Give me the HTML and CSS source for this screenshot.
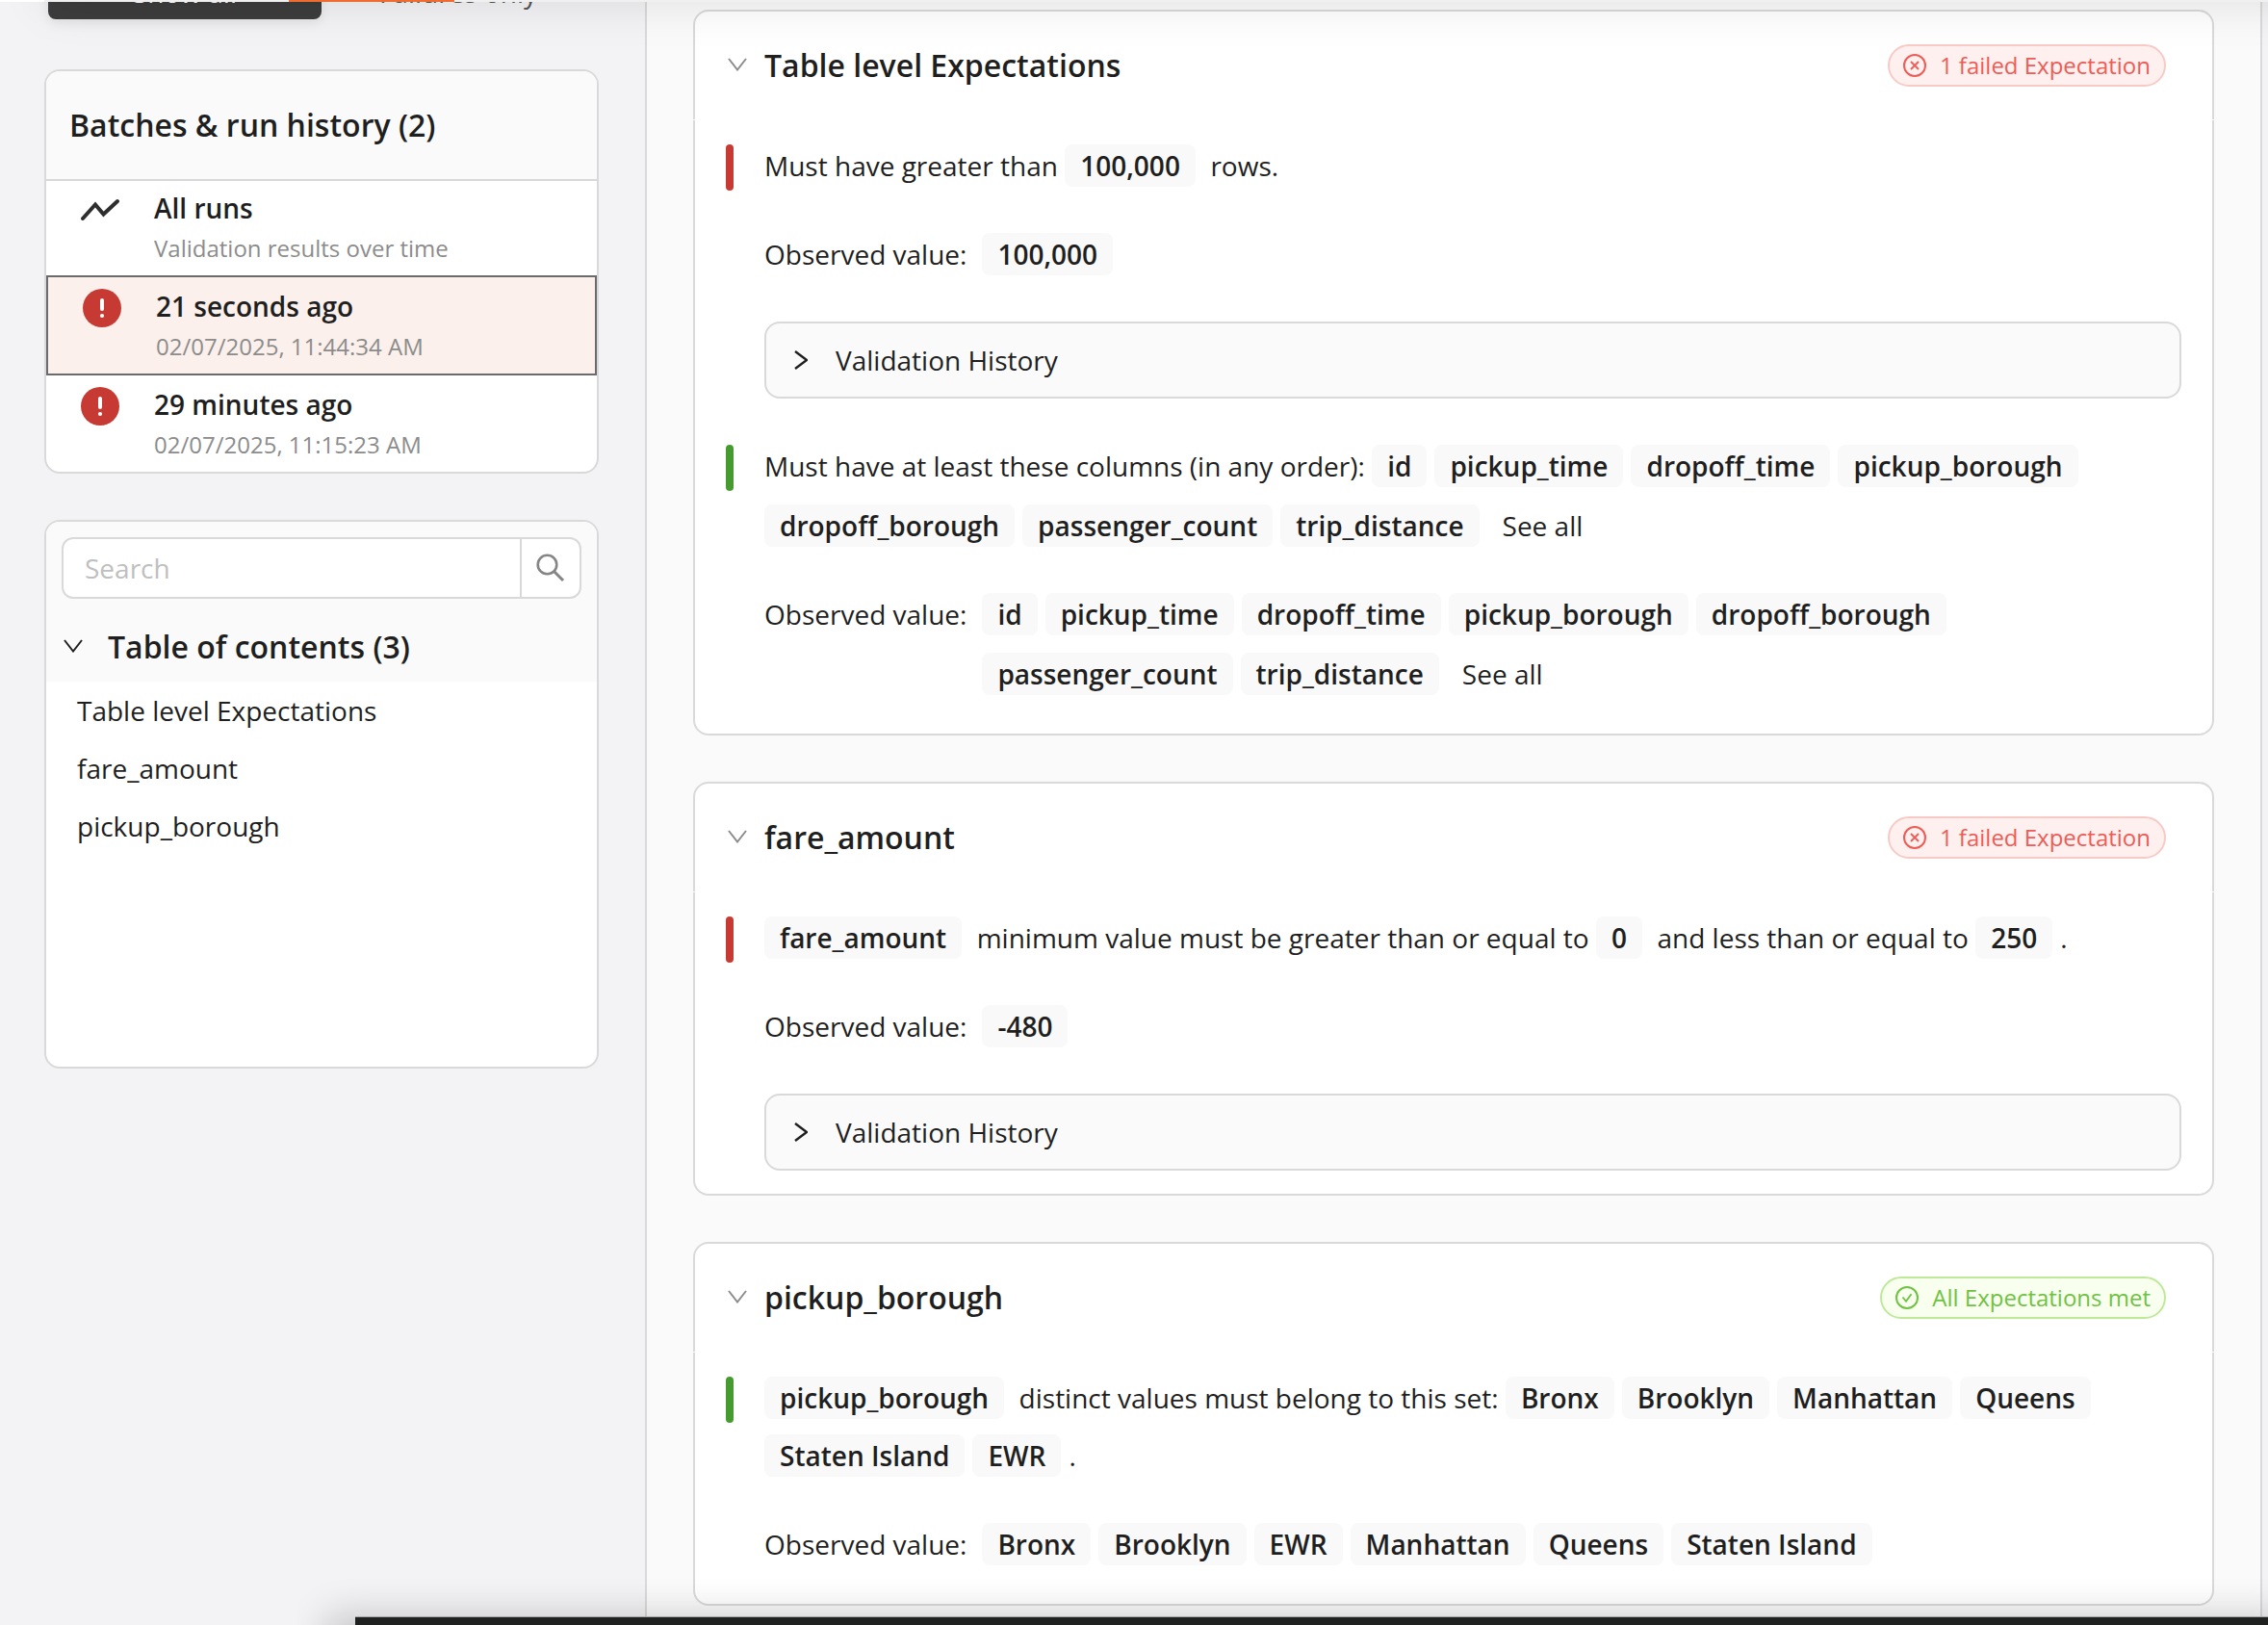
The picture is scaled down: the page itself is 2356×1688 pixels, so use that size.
FILE: index.html
```
<!DOCTYPE html>
<html lang="en">
<head>
<meta charset="utf-8">
<title>Validation results</title>
<link rel="stylesheet" href="styles.css">
</head>
<body>
<svg width="0" height="0" class="sprite" aria-hidden="true">
  <symbol id="chev-down" viewBox="0 0 20 14"><path d="M1 1 10 12.5 19 1" fill="none" stroke="currentColor" stroke-width="2"/></symbol>
  <symbol id="chev-right" viewBox="0 0 14 20"><path d="M1 1 13 10 1 19" fill="none" stroke="currentColor" stroke-width="2.4"/></symbol>
  <symbol id="fail" viewBox="0 0 24 24"><circle cx="12" cy="12" r="11" fill="none" stroke="currentColor" stroke-width="2"/><path d="M8 8 16 16M16 8 8 16" stroke="currentColor" stroke-width="1.8"/></symbol>
  <symbol id="pass" viewBox="0 0 24 24"><circle cx="12" cy="12" r="11" fill="none" stroke="currentColor" stroke-width="2"/><path d="M7.5 11.5 11 15.8 16.5 8.2" fill="none" stroke="currentColor" stroke-width="1.9"/></symbol>
  <symbol id="error" viewBox="0 0 40 40"><circle cx="20" cy="20" r="20" fill="#c73a34"/><path d="M20 12v9" stroke="#fff" stroke-width="4" stroke-linecap="round"/><circle cx="20" cy="28" r="2.1" fill="#fff"/></symbol>
</svg>
<div class="page">
  <aside class="sidebar">
    <div class="toggle">
      <div class="toggle-item active">Show all</div>
      <div class="toggle-item">Failures only</div>
    </div>
    <section class="panel runs">
      <h2 class="panel-title">Batches &amp; run history (2)</h2>
      <div class="run all">
        <svg class="run-icon" viewBox="0 0 40 40"><path d="M2 28 15 13.500 23.500 23.500 38 10" fill="none" stroke="#2e2e2e" stroke-width="4" stroke-linecap="round" stroke-linejoin="miter"/></svg>
        <div><div class="run-name">All runs</div><div class="run-sub">Validation results over time</div></div>
      </div>
      <div class="run selected">
        <svg class="run-icon"><use href="#error"/></svg>
        <div><div class="run-name">21 seconds ago</div><div class="run-sub">02/07/2025, 11:44:34 AM</div></div>
      </div>
      <div class="run">
        <svg class="run-icon"><use href="#error"/></svg>
        <div><div class="run-name">29 minutes ago</div><div class="run-sub">02/07/2025, 11:15:23 AM</div></div>
      </div>
    </section>
    <section class="panel toc">
      <div class="toc-head">
        <div class="search">
          <div class="search-text">Search</div>
          <div class="search-btn"><svg viewBox="0 0 30 30"><circle cx="11.500" cy="11.500" r="9.800" fill="none" stroke="#858585" stroke-width="2.600"/><path d="M18.500 18.500 28 28" stroke="#858585" stroke-width="3"/></svg></div>
        </div>
        <div class="toc-title"><svg class="down"><use href="#chev-down"/></svg>Table of contents (3)</div>
      </div>
      <ul class="toc-list"><li>Table level Expectations</li><li>fare_amount</li><li>pickup_borough</li></ul>
    </section>
  </aside>
  <main class="main">
    <section class="card">
      <header class="card-head">
        <svg class="down"><use href="#chev-down"/></svg><h2>Table level Expectations</h2>
        <span class="badge red"><svg><use href="#fail"/></svg>1 failed Expectation</span>
      </header>
      <div class="rule failed">
        <div class="flow"><span>Must have greater than</span><b>100,000</b><span class="after">rows.</span></div>
      </div>
      <div class="observed"><span class="label">Observed value:</span><div class="flow"><b>100,000</b></div></div>
      <div class="history"><svg class="right"><use href="#chev-right"/></svg>Validation History</div>
      <div class="rule passed second">
        <div class="flow"><span>Must have at least these columns (in any order):</span><b>id</b><b>pickup_time</b><b>dropoff_time</b><b>pickup_borough</b><i class="break"></i><b>dropoff_borough</b><b>passenger_count</b><b>trip_distance</b><span class="see">See all</span></div>
      </div>
      <div class="observed"><span class="label">Observed value:</span><div class="flow"><b>id</b><b>pickup_time</b><b>dropoff_time</b><b>pickup_borough</b><b>dropoff_borough</b><i class="break"></i><b>passenger_count</b><b>trip_distance</b><span class="see">See all</span></div></div>
    </section>
    <section class="card short">
      <header class="card-head">
        <svg class="down"><use href="#chev-down"/></svg><h2>fare_amount</h2>
        <span class="badge red"><svg><use href="#fail"/></svg>1 failed Expectation</span>
      </header>
      <div class="rule failed">
        <div class="flow"><b>fare_amount</b><span class="after">minimum value must be greater than or equal to</span><b>0</b><span class="after">and less than or equal to</span><b>250</b><span>.</span></div>
      </div>
      <div class="observed"><span class="label">Observed value:</span><div class="flow"><b>-480</b></div></div>
      <div class="history"><svg class="right"><use href="#chev-right"/></svg>Validation History</div>
    </section>
    <section class="card tight">
      <header class="card-head">
        <svg class="down"><use href="#chev-down"/></svg><h2>pickup_borough</h2>
        <span class="badge green"><svg><use href="#pass"/></svg>All Expectations met</span>
      </header>
      <div class="rule passed">
        <div class="flow"><b>pickup_borough</b><span class="after">distinct values must belong to this set:</span><b>Bronx</b><b>Brooklyn</b><b>Manhattan</b><b>Queens</b><i class="break"></i><b>Staten Island</b><b>EWR</b><span>.</span></div>
      </div>
      <div class="observed"><span class="label">Observed value:</span><div class="flow"><b>Bronx</b><b>Brooklyn</b><b>EWR</b><b>Manhattan</b><b>Queens</b><b>Staten Island</b></div></div>
    </section>
  </main>
</div>
<div class="overlay">
  <div class="topbar"><div class="tab"></div></div>
  <div class="bottomshade"><div class="bottombar"></div></div>
</div>
</body>
</html>
```
FILE: styles.css
```
* { box-sizing: border-box; }
html, body { margin: 0; height: 100%; overflow: hidden; }
body { position: relative; background: #f3f3f6; color: #1f1f1f; font: 28px/40px "Open Sans", "Noto Sans", sans-serif; }
.sprite { position: absolute; }
h2 { margin: 0; font-size: 32px; font-weight: 600; line-height: 44px; }
.page { display: flex; height: 1688px; overflow: hidden; }

/* Left column */
.sidebar { width: 672px; flex: none; border-right: 2px solid #d9d9d9; padding: 0 48px 0 46px; }
.toggle { display: flex; height: 72px; padding-left: 4px; }
.toggle-item { width: 284px; height: 64px; margin-top: -44px; text-align: center; line-height: 72px; color: #555; }
.toggle-item.active { background: #3d3d3d; color: #fff; border-radius: 8px; box-shadow: 0 4px 12px rgba(0,0,0,.08); }
.panel { border: 2px solid #d9d9d9; border-radius: 16px; background: #fff; width: 576px; overflow: hidden; }
.panel-title { height: 114px; padding: 34px 24px; background: #fafafa; border-bottom: 2px solid #d9d9d9; }
.run { display: flex; gap: 36px; height: 100px; padding: 10px 36px; }
.run.selected { height: 104px; border: 2px solid #6b6b6d; background: #fbf0eb; padding: 10px 36px; }
.run-icon { width: 40px; height: 40px; margin-top: 2px; flex: none; }
.run.all { height: 98px; padding-top: 8px; }
.run.all .run-icon { margin-top: 3px; }
.run-name { font-weight: 600; line-height: 40px; }
.run-sub { font-size: 24px; line-height: 43px; color: #8c8c8c; }
.toc { margin-top: 48px; height: 570px; }
.toc-head { background: #fafafa; height: 166px; padding: 16px; }
.search { display: flex; height: 64px; width: 540px; border: 2px solid #d9d9d9; border-radius: 12px; background: #fff; color: #bfbfbf; }
.search-text { flex: 1; padding: 10px 22px; }
.search-btn { width: 62px; border-left: 2px solid #d9d9d9; padding: 15px; }
.search-btn svg { width: 30px; height: 30px; display: block; }
.toc-title { display: flex; gap: 26px; margin-top: 28px; padding-left: 2px; font-size: 32px; font-weight: 600; line-height: 44px; }
.down { width: 20px; height: 14px; flex: none; margin-top: 14px; }
.toc-list { list-style: none; margin: 0; padding: 10px 32px; }
.toc-list li { height: 60px; }

/* Results column */
.main { width: 1678px; flex: none; background: #fafafa; border-right: 2px solid #d9d9d9; padding: 10px 48px 0; display: flex; flex-direction: column; gap: 48px; }
.card { position: relative; border: 2px solid #d9d9d9; border-radius: 16px; background: #fff; height: 754px; flex: none; padding: 34px 32px 0; }
.card::before { content: ""; position: absolute; left: -2px; right: -2px; top: 112px; height: 1px; background: #fff; }
.card.short { height: 430px; }
.card.tight { height: 378px; }
.card-head { display: flex; align-items: flex-start; height: 104px; padding: 0 16px 0 0; }
.card-head .down { color: #8c8c8c; margin: 13.5px 18px 0 2px; }
.card-head h2 { flex: 1; }
.badge { display: flex; align-items: center; gap: 14px; height: 44px; border: 2px solid; border-radius: 22px; padding: 0 14px; font-size: 24px; line-height: 40px; }
.badge svg { width: 24px; height: 24px; }
.badge.red { color: #ed5c57; background: #fef0ee; border-color: #f7cac6; }
.badge.green { color: #6fc243; background: #f8ffee; border-color: #bee998; }
.rule { position: relative; padding-left: 40px; }
.rule::before { content: ""; position: absolute; left: 0; top: 0; width: 8px; height: 48px; border-radius: 4px; background: #c73a34; }
.rule.passed::before { background: #459a30; }
.rule.second { margin-top: 48px; }
.flow { display: flex; flex-wrap: wrap; align-items: center; gap: 9px 8px; }
.tight .flow { row-gap: 8px; }
.flow span { margin-right: -0.7px; }
.flow b { height: 44px; padding: 2px 16px; border-radius: 8px; background: #f9f9f9; font-weight: 600; }
.flow .after { margin-left: 7.5px; }
.flow .see { margin-left: 16px; }
/* Zero-height line; the row gap on both sides of it adds up to the line spacing */
.break { flex-basis: 100%; height: 0; }
.observed { display: flex; gap: 16px; margin-top: 48px; padding-left: 40px; }
.observed .label { line-height: 44px; white-space: nowrap; }
.observed .flow { flex: 1; }
.history { display: flex; align-items: center; gap: 29px; height: 80px; margin: 48px 0 0 40px; border: 2px solid #d9d9d9; border-radius: 16px; background: #fafafa; padding-left: 29px; }
.right { width: 14px; height: 20px; }

/* Bars that overlap the scrolled content */
.overlay { position: absolute; inset: 0; overflow: hidden; pointer-events: none; }
.topbar { position: absolute; left: 46px; right: -60px; top: -100px; height: 102px; padding-top: 100px; background: #f0f0f0; box-shadow: 0 4px 48px rgba(0,0,0,.1); }
.topbar::before { content: ""; position: absolute; left: -46px; bottom: 0; width: 46px; height: 2px; background: #fff; }
.tab { width: 172px; height: 2px; margin-left: 254px; background: #ee6c30; }
.bottomshade { position: absolute; left: 300px; right: 0; bottom: 0; height: 80px; overflow: hidden; }
.bottombar { position: absolute; left: 69px; right: 0; bottom: 0; height: 9px; background: #1f2121; border-top: 1px solid #a6a6a6; box-shadow: 0 30px 40px 30px rgba(0,0,0,.2); clip-path: inset(-60px 0 0 -60px); }
```
